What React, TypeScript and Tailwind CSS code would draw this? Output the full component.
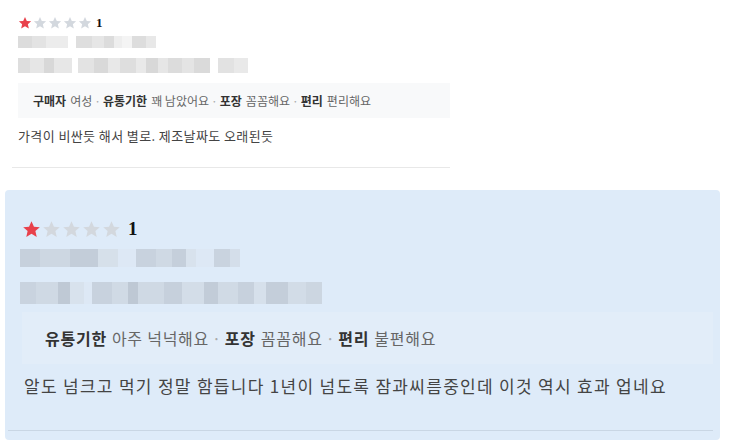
import React from "react";

const Star = ({ filled, size }: { filled: boolean; size: number }) => (
  <svg width={size} height={size} viewBox="0 0 24 24" className="shrink-0">
    <path
      d="M12 1.5l3.1 7 7.4.6-5.6 4.9 1.7 7.4L12 17.5l-6.6 3.9 1.7-7.4L1.5 9.1l7.4-.6z"
      fill={filled ? "#e8414b" : "#d3d8de"}
    />
  </svg>
);

const Blur = ({ segs, h, base }: { segs: [number, string][]; h: number; base: string }) => (
  <div className="flex" style={{ height: h }}>
    {segs.map(([w, c], i) => (
      <div key={i} style={{ width: w, background: c === "b" ? base : c }} />
    ))}
  </div>
);

const font = { fontFamily: '"Noto Sans CJK KR", "Noto Sans", sans-serif' };

export default function App() {
  return (
    <div className="w-[743px] h-[447px] bg-white overflow-hidden" style={font}>
      {/* Top review */}
      <div className="w-[450px] pl-[12px]">
        <div className="pl-[6px] pt-[16px]">
          <div className="flex items-center h-[14px]">
            <div className="flex gap-[1px]">
              <Star filled size={14} />
              <Star filled={false} size={14} />
              <Star filled={false} size={14} />
              <Star filled={false} size={14} />
              <Star filled={false} size={14} />
            </div>
            <span className="ml-[4px] text-[13px] font-bold text-[#111]" style={{ fontFamily: '"Liberation Serif", serif' }}>1</span>
          </div>
          <div className="mt-[6px]">
            <Blur h={12} base="#e6e6e6" segs={[[14, "#dcdcdc"], [14, "#e3e3e3"], [22, "#ececec"], [8, "#fff"], [16, "#dedede"], [12, "#e6e6e6"], [10, "#dcdcdc"], [8, "#eeeeee"], [10, "#f4f4f4"], [14, "#dddddd"], [10, "#e8e8e8"]]} />
          </div>
          <div className="mt-[10px]">
            <Blur h={15} base="#e5e5e5" segs={[[12, "#dedede"], [14, "#e6e6e6"], [10, "#d8d8d8"], [18, "#e7e7e7"], [6, "#fff"], [16, "#e3e3e3"], [14, "#d9d9d9"], [12, "#e8e8e8"], [16, "#dedede"], [10, "#e9e9e9"], [12, "#d8d8d8"], [10, "#e6e6e6"], [14, "#dcdcdc"], [12, "#e4e4e4"], [16, "#dadada"], [8, "#fff"], [16, "#e2e2e2"], [14, "#e9e9e9"]]} />
          </div>
          <div className="mt-[10px] h-[35px] bg-[#f8f9fa] flex items-center pl-[15px] text-[12px] text-[#666]">
            <span className="font-semibold text-[#333]">구매자</span>
            <span className="ml-[4px]">여성</span>
            <span className="mx-[2px] text-[#aaa]">·</span>
            <span className="font-semibold text-[#333]">유통기한</span>
            <span className="ml-[4px]">꽤 남았어요</span>
            <span className="mx-[2px] text-[#aaa]">·</span>
            <span className="font-semibold text-[#333]">포장</span>
            <span className="ml-[4px]">꼼꼼해요</span>
            <span className="mx-[2px] text-[#aaa]">·</span>
            <span className="font-semibold text-[#333]">편리</span>
            <span className="ml-[4px]">편리해요</span>
          </div>
          <div className="mt-[9px] text-[13px] tracking-[0.4px] text-[#444] leading-[18px]">
            가격이 비싼듯 해서 별로. 제조날짜도 오래된듯
          </div>
        </div>
        <div className="mt-[22px] h-px bg-[#e8e8e8]" />
      </div>

      {/* Bottom highlighted review */}
      <div className="ml-[5px] mt-[22px] w-[715px] h-[250px] rounded-[4px] bg-[#deebf9] pl-[3px] pr-[7px] pt-[30px]">
        <div className="pl-[14px]">
          <div className="flex items-center h-[18px]">
            <div className="flex gap-[1px]">
              <Star filled size={19} />
              <Star filled={false} size={19} />
              <Star filled={false} size={19} />
              <Star filled={false} size={19} />
              <Star filled={false} size={19} />
            </div>
            <span className="ml-[7px] text-[19px] font-bold text-[#111]" style={{ fontFamily: '"Liberation Serif", serif' }}>1</span>
          </div>
          <div className="mt-[11px] -ml-[2px]">
            <Blur h={18} base="#c9d4e0" segs={[[20, "#c6d0dc"], [30, "#cdd7e2"], [28, "#c3cdd9"], [20, "#d6e0ea"], [18, "#dde8f5"], [20, "#c8d2de"], [16, "#cfd9e4"], [14, "#c5cfdb"], [10, "#d8e2ed"], [18, "#dde8f5"], [16, "#c9d3df"], [10, "#d4deea"]]} />
          </div>
          <div className="mt-[15px] -ml-[2px]">
            <Blur h={22} base="#cbd5e1" segs={[[16, "#c9d3df"], [22, "#cfd9e4"], [12, "#bfc9d5"], [14, "#d8e2ed"], [8, "#dde8f5"], [20, "#c8d2de"], [16, "#d0dae5"], [10, "#bec8d4"], [26, "#cfd9e4"], [18, "#c6d0dc"], [22, "#d3dde8"], [14, "#c2ccd8"], [20, "#d0dae5"], [16, "#c7d1dd"], [12, "#d6e0eb"], [22, "#c4ceda"], [18, "#d2dce7"], [16, "#ccd6e1"]]} />
          </div>
          <div className="mt-[8px] h-[52px] bg-[#e2edf9] flex items-center pl-[23px] text-[16px] tracking-[0.75px] text-[#666]">
            <span className="font-semibold text-[#333]">유통기한</span>
            <span className="ml-[5px]">아주 넉넉해요</span>
            <span className="mx-[3px] text-[#aaa]">·</span>
            <span className="font-semibold text-[#333]">포장</span>
            <span className="ml-[5px]">꼼꼼해요</span>
            <span className="mx-[3px] text-[#aaa]">·</span>
            <span className="font-semibold text-[#333]">편리</span>
            <span className="ml-[5px]">불편해요</span>
          </div>
          <div className="mt-[10px] pl-[2px] text-[17px] tracking-[1.3px] text-[#444] leading-[24px]">
            알도 넘크고 먹기 정말 함듭니다 1년이 넘도록 잠과씨름중인데 이것 역시 효과 업네요
          </div>
        </div>
        <div className="mt-[32px] h-px bg-[#c9d6e4]" />
      </div>
    </div>
  );
}
